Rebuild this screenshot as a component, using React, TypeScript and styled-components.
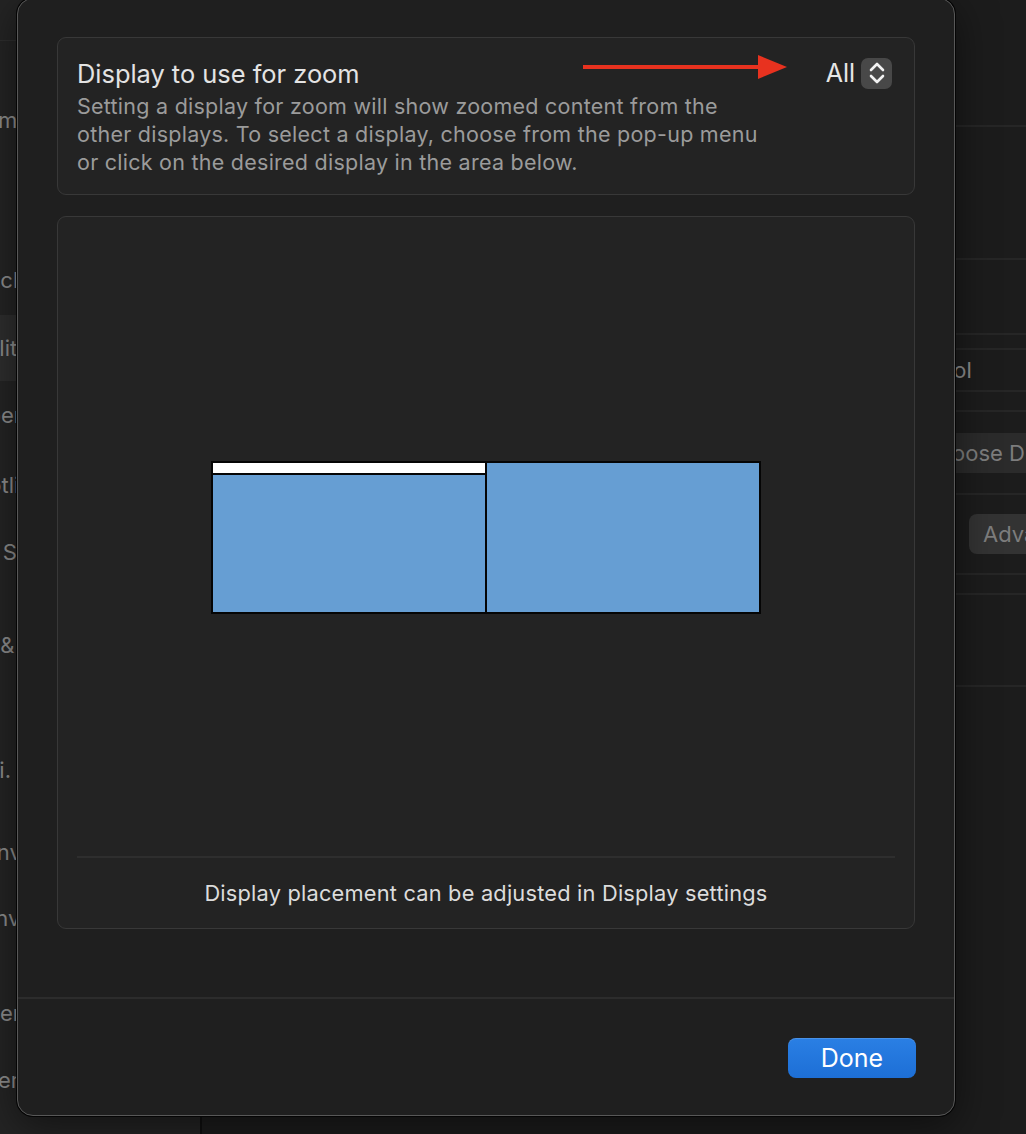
import styled, { createGlobalStyle } from 'styled-components';

const GlobalStyle = createGlobalStyle`
  html, body {
    margin: 0;
    padding: 0;
    background: #1c1c1c;
    overflow: hidden;
  }
  body {
    font-family: Inter, "Noto Sans", "Liberation Sans", sans-serif;
    -webkit-font-smoothing: antialiased;
  }
`;

/* ---------- background window (System Settings) ---------- */

const Window = styled.div`
  position: relative;
  display: flex;
  width: 1026px;
  height: 1134px;
  overflow: hidden;
`;

const Sidebar = styled.div`
  width: 200px;
  flex-shrink: 0;
  background: #242424;
  border-right: 2px solid #0f0f0f;
  display: flex;
  flex-direction: column;
`;

const SidebarTop = styled.div`
  height: 40px;
  border-bottom: 1px solid #2e2e2e;
`;

const SidebarItem = styled.div<{ $top: number; $active?: boolean }>`
  margin-top: ${(p) => p.$top}px;
  height: ${(p) => (p.$active ? 66 : 30)}px;
  flex-shrink: 0;
  display: flex;
  align-items: center;
  background: ${(p) => (p.$active ? '#2e2e2e' : 'transparent')};
`;

const SidebarLabel = styled.div<{ $end: number }>`
  width: ${(p) => p.$end}px;
  display: flex;
  justify-content: flex-end;
  overflow: hidden;
  white-space: nowrap;
  color: #8c8c8c;
  font-size: 22px;
`;

const Pane = styled.div`
  flex: 1;
  display: flex;
  flex-direction: column;
  background: #1c1c1c;
`;

const PaneRow = styled.div<{ $h: number; $line?: boolean; $indent?: number }>`
  height: ${(p) => p.$h}px;
  flex-shrink: 0;
  box-sizing: border-box;
  border-bottom: ${(p) => (p.$line ? '2px solid #262626' : 'none')};
  display: flex;
  align-items: center;
  padding-left: ${(p) => p.$indent ?? 0}px;
  white-space: nowrap;
`;

const PaneText = styled.span`
  color: #8c8c8c;
  font-size: 22px;
`;

const PaneButton = styled.div<{ $bg: string }>`
  height: 40px;
  padding: 0 14px;
  display: flex;
  align-items: center;
  border-radius: 8px;
  background: ${(p) => p.$bg};
  color: #7d7d7d;
  font-size: 22px;
`;

/* ---------- sheet ---------- */

const Sheet = styled.div`
  position: absolute;
  left: 17px;
  top: -2px;
  width: 938px;
  height: 1118px;
  box-sizing: border-box;
  background: #1f1f1f;
  border: 1px solid #585858;
  border-radius: 16px;
  box-shadow: 0 0 0 1px #050505, 0 10px 40px rgba(0, 0, 0, 0.5);
  display: flex;
  flex-direction: column;
`;

const SheetBody = styled.div`
  flex: 1;
  padding: 38px 39px 0 39px;
  display: flex;
  flex-direction: column;
  gap: 21px;
  border-bottom: 2px solid #2c2c2c;
`;

const Group = styled.div<{ $h: number }>`
  height: ${(p) => p.$h}px;
  flex-shrink: 0;
  box-sizing: border-box;
  background: #232323;
  border: 1px solid #383838;
  border-radius: 9px;
`;

const HeaderGroup = styled(Group)`
  padding: 19px 22px 0 19px;
  display: flex;
  flex-direction: column;
`;

const HeaderRow = styled.div`
  display: flex;
  align-items: center;
  height: 32px;
`;

const Title = styled.div`
  color: #e3e3e3;
  font-size: 25.4px;
  flex: 1;
  white-space: nowrap;
`;

const Description = styled.div`
  margin-top: 3px;
  color: #9b9b9b;
  font-size: 21.5px;
  line-height: 28px;
  letter-spacing: 0.25px;
  white-space: nowrap;
`;

const Arrow = styled.svg`
  width: 206px;
  height: 30px;
  margin-right: 38px;
  margin-top: -12px;
  flex-shrink: 0;
`;

const PopupValue = styled.span`
  color: #e6e6e6;
  font-size: 25px;
  margin-right: 6px;
`;

const Stepper = styled.div`
  width: 31px;
  height: 31px;
  border-radius: 7px;
  background: #484848;
  display: flex;
  align-items: center;
  justify-content: center;
`;

const ArrangementGroup = styled(Group)`
  display: flex;
  flex-direction: column;
  padding: 0 19px;
`;

const Canvas = styled.div`
  flex: 1;
  display: flex;
  align-items: center;
  justify-content: center;
  padding-top: 2px;
`;

const DisplayPair = styled.div`
  display: flex;
  background: #050505;
  border: 2px solid #050505;
  gap: 2px;
`;

const Screen = styled.div<{ $menuBar?: boolean }>`
  width: 272px;
  height: 149px;
  background: #669ed3;
  display: flex;
  flex-direction: column;
  &::before {
    content: '';
    display: ${(p) => (p.$menuBar ? 'block' : 'none')};
    height: 10px;
    background: #ffffff;
    border-bottom: 2px solid #050505;
  }
`;

const Divider = styled.div`
  height: 2px;
  background: #2e2e2e;
`;

const Footnote = styled.div`
  height: 70px;
  display: flex;
  align-items: center;
  justify-content: center;
  color: #dcdcdc;
  font-size: 21.8px;
  letter-spacing: 0.2px;
  white-space: nowrap;
`;

const SheetFooter = styled.div`
  height: 116px;
  flex-shrink: 0;
  display: flex;
  align-items: center;
  justify-content: flex-end;
  padding: 2px 38px 0 0;
  box-sizing: border-box;
`;

const DoneButton = styled.button`
  width: 128px;
  height: 40px;
  border: none;
  border-radius: 8px;
  background: linear-gradient(#2a7fe4, #1d6fd6);
  color: #ffffff;
  font-family: inherit;
  font-size: 25px;
  box-shadow: inset 0 1px 0 rgba(255, 255, 255, 0.15);
`;

// y = vertical centre of each sidebar row in the page, end = right edge of its label
const sidebarItems = [
  { y: 120, end: 30, label: 'Screen Time' },
  { y: 280, end: 25, label: 'Desktop & Dock' },
  { y: 348, end: 30, label: 'Accessibility', active: true },
  { y: 415, end: 22, label: 'Wallpaper' },
  { y: 485, end: 53, label: 'Spotlight' },
  { y: 552, end: 76, label: 'Lock Screen' },
  { y: 645, end: 107, label: 'Privacy & Security' },
  { y: 770, end: 11, label: 'Wi‑Fi.' },
  { y: 852, end: 50, label: 'Convert' },
  { y: 918, end: 112, label: 'Environment' },
  { y: 1013, end: 21, label: 'Game Center' },
  { y: 1080, end: 30, label: 'Keys & System' },
];

export default function App() {
  let bottom = 41;
  const rows = sidebarItems.map((it) => {
    const h = it.active ? 66 : 30;
    const top = it.y - h / 2 - bottom;
    bottom = it.y + h / 2;
    return { ...it, top };
  });

  return (
    <>
      <GlobalStyle />
      <Window>
        <Sidebar>
          <SidebarTop />
          {rows.map((it, i) => (
            <SidebarItem key={i} $top={it.top} $active={it.active}>
              <SidebarLabel $end={it.end}>{it.label}</SidebarLabel>
            </SidebarItem>
          ))}
        </Sidebar>
        <Pane>
          <PaneRow $h={127} $line />
          <PaneRow $h={133} $line />
          <PaneRow $h={75} $line />
          <PaneRow $h={15} $line />
          <PaneRow $h={42} $line $indent={694}>
            <PaneText>Control</PaneText>
          </PaneRow>
          <PaneRow $h={20} $line />
          <PaneRow $h={83} $line $indent={707}>
            <PaneButton $bg="#2b2b2b">Choose Display…</PaneButton>
          </PaneRow>
          <PaneRow $h={80} $line $indent={767}>
            <PaneButton $bg="#333333">Advanced…</PaneButton>
          </PaneRow>
          <PaneRow $h={20} $line />
          <PaneRow $h={92} $line />
        </Pane>

        <Sheet>
          <SheetBody>
            <HeaderGroup $h={158}>
              <HeaderRow>
                <Title>Display to use for zoom</Title>
                <Arrow viewBox="0 0 206 30">
                  <line x1="1" y1="15" x2="182" y2="15" stroke="#e8321f" strokeWidth="4" />
                  <polygon points="176,3 205,15 176,27" fill="#e8321f" />
                </Arrow>
                <PopupValue>All</PopupValue>
                <Stepper>
                  <svg width="18" height="24" viewBox="0 0 18 24">
                    <polyline points="3,9 9,3 15,9" fill="none" stroke="#f2f2f2" strokeWidth="2.6" strokeLinecap="round" strokeLinejoin="round" />
                    <polyline points="3,15 9,21 15,15" fill="none" stroke="#f2f2f2" strokeWidth="2.6" strokeLinecap="round" strokeLinejoin="round" />
                  </svg>
                </Stepper>
              </HeaderRow>
              <Description>
                Setting a display for zoom will show zoomed content from the
                <br />
                other displays. To select a display, choose from the pop-up menu
                <br />
                or click on the desired display in the area below.
              </Description>
            </HeaderGroup>

            <ArrangementGroup $h={713}>
              <Canvas>
                <DisplayPair>
                  <Screen $menuBar />
                  <Screen />
                </DisplayPair>
              </Canvas>
              <Divider />
              <Footnote>Display placement can be adjusted in Display settings</Footnote>
            </ArrangementGroup>
          </SheetBody>
          <SheetFooter>
            <DoneButton>Done</DoneButton>
          </SheetFooter>
        </Sheet>
      </Window>
    </>
  );
}
